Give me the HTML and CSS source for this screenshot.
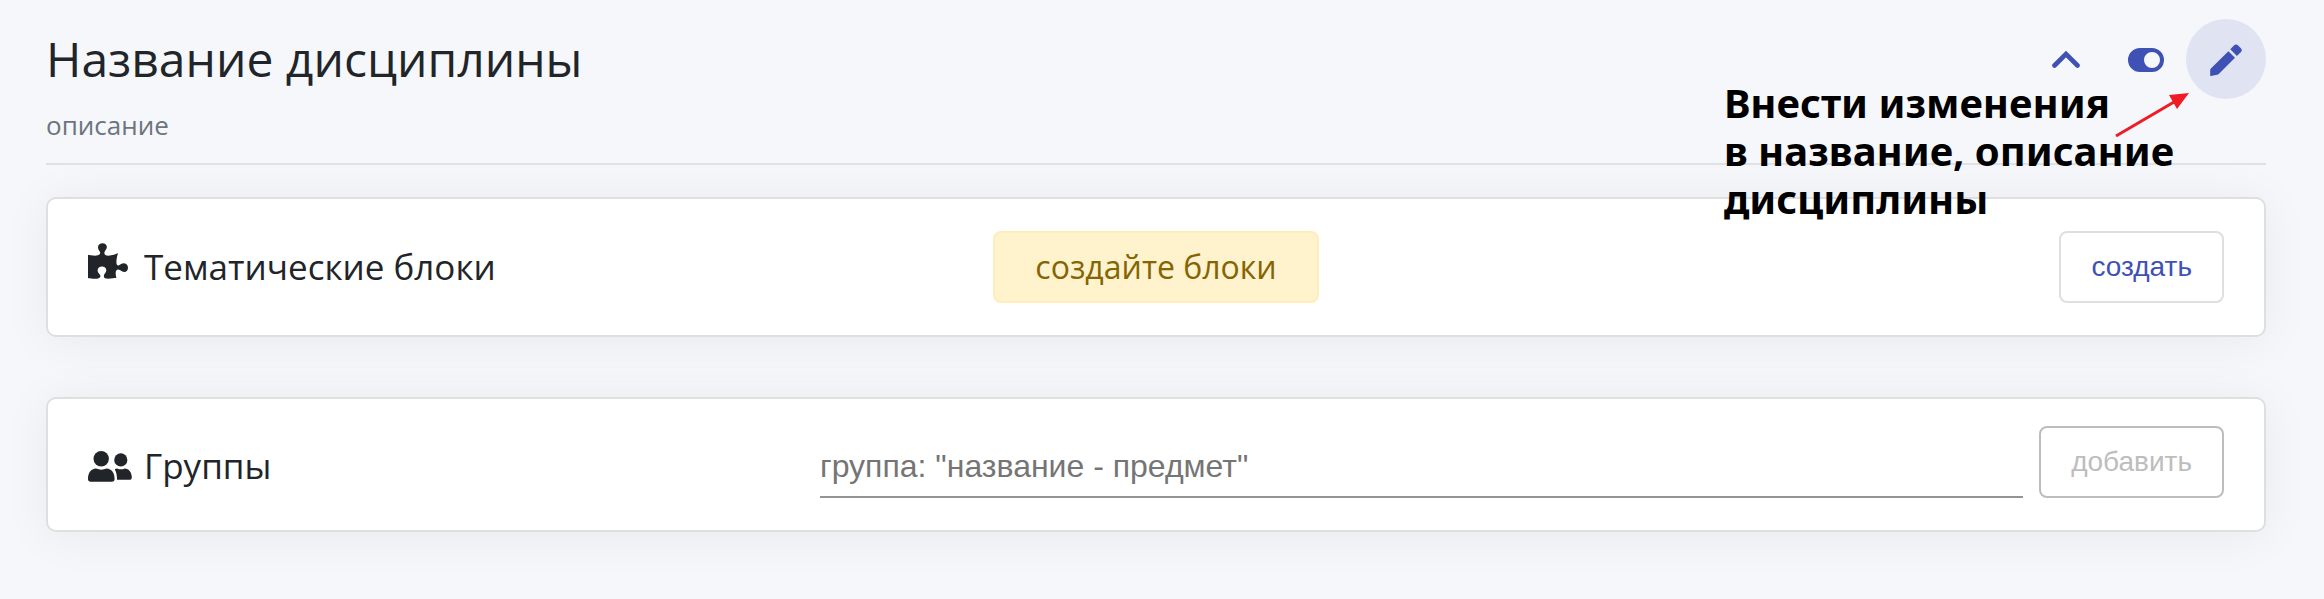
FILE: index.html
```html
<!DOCTYPE html>
<html lang="ru">
<head>
    <meta charset="UTF-8">
    <meta name="viewport" content="width=device-width, initial-scale=1.0">
    <title>Название дисциплины</title>
    <link rel="stylesheet" href="styles.css">
</head>
<body>
    <main class="page">
        <header class="header">
            <h1 class="title">Название дисциплины</h1>
            <div class="actions">
                <button class="icon-btn" type="button" aria-label="Свернуть">
                    <svg width="28" height="18" viewBox="0 0 28 18">
                        <path d="M2.5 14.5L14 3l11.5 11.5" fill="none" stroke="currentColor" stroke-width="4.6" stroke-linecap="round" stroke-linejoin="miter"/>
                    </svg>
                </button>
                <button class="icon-btn" type="button" aria-label="Включить">
                    <svg width="36" height="24" viewBox="0 0 36 24">
                        <path fill="currentColor" fill-rule="evenodd" d="M12 0h12a12 12 0 0 1 0 24H12a12 12 0 0 1 0-24zm12 4a8 8 0 1 0 0 16 8 8 0 0 0 0-16z"/>
                    </svg>
                </button>
                <button class="icon-btn active" type="button" aria-label="Редактировать">
                    <svg width="32" height="32" viewBox="0 0 32 32">
                        <path fill="currentColor" d="M.9 24.6L18.4 7.2l6.6 6.6L9 29.8q-.8.8-1.9 1L.9 32q-.9 0-.7-.9L.2 26q0-.8.7-1.4z"/>
                        <path fill="currentColor" d="M20.3 5.2L23.9 1.5q2.1-2 4.2 0l2.6 2.6q2 2.1 0 4.2L26.9 11.9z"/>
                    </svg>
                </button>
            </div>
            <div class="hint">
                Внести изменения<br>в название, описание<br>дисциплины
                <svg class="arrow" width="76" height="48" viewBox="0 0 76 48">
                    <path d="M2 45L60 11" stroke="#ee1c25" stroke-width="3" fill="none"/>
                    <path d="M75 2L55 4l8 14z" fill="#ee1c25"/>
                </svg>
            </div>
        </header>
        <p class="description">описание</p>
        <hr class="divider">

        <section class="card blocks">
            <h2 class="card-title">
                <svg class="icon-puzzle" width="44" height="36" viewBox="0 0 634 512">
                    <path fill="currentColor" d="M519.442 288.651c-41.519 0-59.5 31.593-82.058 31.593C377.409 320.244 432 144 432 144s-196.288 80-196.288-3.297c0-35.827 36.288-46.25 36.288-85.985C272 19.216 243.885 0 210.539 0c-34.654 0-66.366 18.891-66.366 56.346 0 41.364 31.711 59.277 31.711 81.75C175.885 207.719 0 166.758 0 166.758v333.237s178.635 41.047 178.635-28.662c0-22.473-40-40.107-40-81.471 0-37.456 29.25-56.346 63.577-56.346 33.673 0 61.788 19.216 61.788 54.717 0 39.735-36.288 50.158-36.288 85.985 0 60.803 129.675 25.73 181.23 25.73 0 0-34.725-120.101 25.827-120.101 35.962 0 46.423 36.152 86.308 36.152C556.712 416 576 387.99 576 354.443c0-34.199-18.962-65.792-56.558-65.792z"/>
                </svg>
                Тематические блоки
            </h2>
            <div class="alert">создайте блоки</div>
            <button class="btn" type="button">создать</button>
        </section>

        <form class="card groups">
            <label class="card-title" for="group">
                <svg width="44" height="31" viewBox="0 0 44 31">
                    <g fill="currentColor">
                        <circle cx="13.2" cy="7.8" r="7.7"/>
                        <circle cx="32.8" cy="8.9" r="6.6"/>
                        <path d="M8 17.5q5.3 2.3 10.6 0c5 .3 8 4.5 8 10.5q0 2.8-2.8 2.8h-21Q0 30.8 0 28c0-6 3-10.2 8-10.5z"/>
                        <path d="M26.8 18.2q1-.8 2.3-.8 3.9 1.8 7.6 0c4.3.2 7.1 3.9 7.1 8.8q0 2.6-2.6 2.6H29c0-4.3-.3-6.3-2.2-10.6z"/>
                    </g>
                </svg>
                Группы
            </label>
            <div class="field">
                <input class="input" id="group" type="text" placeholder='группа: "название - предмет"'>
                <button class="btn" type="submit" disabled>добавить</button>
            </div>
        </form>
    </main>
</body>
</html>
```
FILE: styles.css
```css
* {
    box-sizing: border-box;
}
body {
    margin: 0;
    font-family: 'Open Sans', sans-serif;
    background: #f6f7fb;
    color: #212529;
}
.page {
    padding: 19px 58px 64px 46px;
}
.header {
    position: relative;
    display: flex;
    align-items: center;
    justify-content: space-between;
}
.title {
    margin: 0;
    font-size: 48px;
    font-weight: 400;
    line-height: 58px;
}
.actions {
    display: flex;
}
.icon-btn {
    display: flex;
    align-items: center;
    justify-content: center;
    width: 80px;
    height: 80px;
    padding: 2px 0 0;
    border: none;
    border-radius: 50%;
    background: none;
    color: #3f51b5;
    cursor: pointer;
}
.icon-btn.active {
    background: #e0e3f2;
}

/* Подсказка поверх страницы */
.hint {
    position: absolute;
    top: 60px;
    right: 92px;
    z-index: 1;
    color: #000;
    font-family: 'Noto Sans', sans-serif;
    font-size: 40px;
    font-weight: 700;
    line-height: 48px;
    white-space: nowrap;
    pointer-events: none;
}
.arrow {
    position: absolute;
    top: 12px;
    right: -16px;
}

.description {
    margin: 6px 0 18px;
    color: #6c757d;
    font-size: 26px;
    font-weight: 400;
    line-height: 40px;
}
.divider {
    margin: 0 0 32px;
    border: none;
    border-top: 2px solid #dee2e6;
}
.card {
    display: grid;
    gap: 30px;
    padding: 32px 40px;
    border: 2px solid #dfdfdf;
    border-radius: 10px;
    background: #fff;
    box-shadow: 0 4px 50px rgba(0, 0, 0, 0.06);
}
.blocks {
    grid-template-columns: 1fr 1fr 1fr;
    align-items: center;
    justify-items: center;
    margin-bottom: 60px;
}
.blocks .card-title {
    justify-self: start;
}
.blocks .btn {
    justify-self: end;
}
.groups {
    grid-template-columns: 1fr 2fr;
    align-items: end;
    padding-top: 27px;
}
.card-title {
    display: flex;
    align-items: center;
    gap: 12px;
    margin: 0;
    font-size: 35px;
    font-weight: 400;
    line-height: 64px;
}
.icon-puzzle {
    margin-bottom: 12px;
}
.alert {
    padding: 0 40px;
    border: 2px solid #ffeeba;
    border-radius: 8px;
    background: #fff3cd;
    color: #856404;
    font-size: 32px;
    line-height: 68px;
}
.btn {
    height: 72px;
    padding: 0 30px;
    border: 2px solid #dfdfdf;
    border-radius: 8px;
    background: #fff;
    color: #3f51b5;
    font-family: 'Liberation Sans', Arial, sans-serif;
    font-size: 28px;
    cursor: pointer;
}
.btn:disabled {
    border-color: #bdbdbd;
    color: #bdbdbd;
    cursor: default;
}
.field {
    display: flex;
    align-items: flex-end;
    gap: 16px;
}
.input {
    flex: 1;
    min-width: 0;
    height: 62px;
    padding: 0;
    border: none;
    border-bottom: 2px solid #949494;
    background: none;
    color: #212529;
    font-family: 'Liberation Sans', Arial, sans-serif;
    font-size: 32px;
    outline: none;
}
.input::placeholder {
    color: #757575;
    opacity: 1;
}
```
